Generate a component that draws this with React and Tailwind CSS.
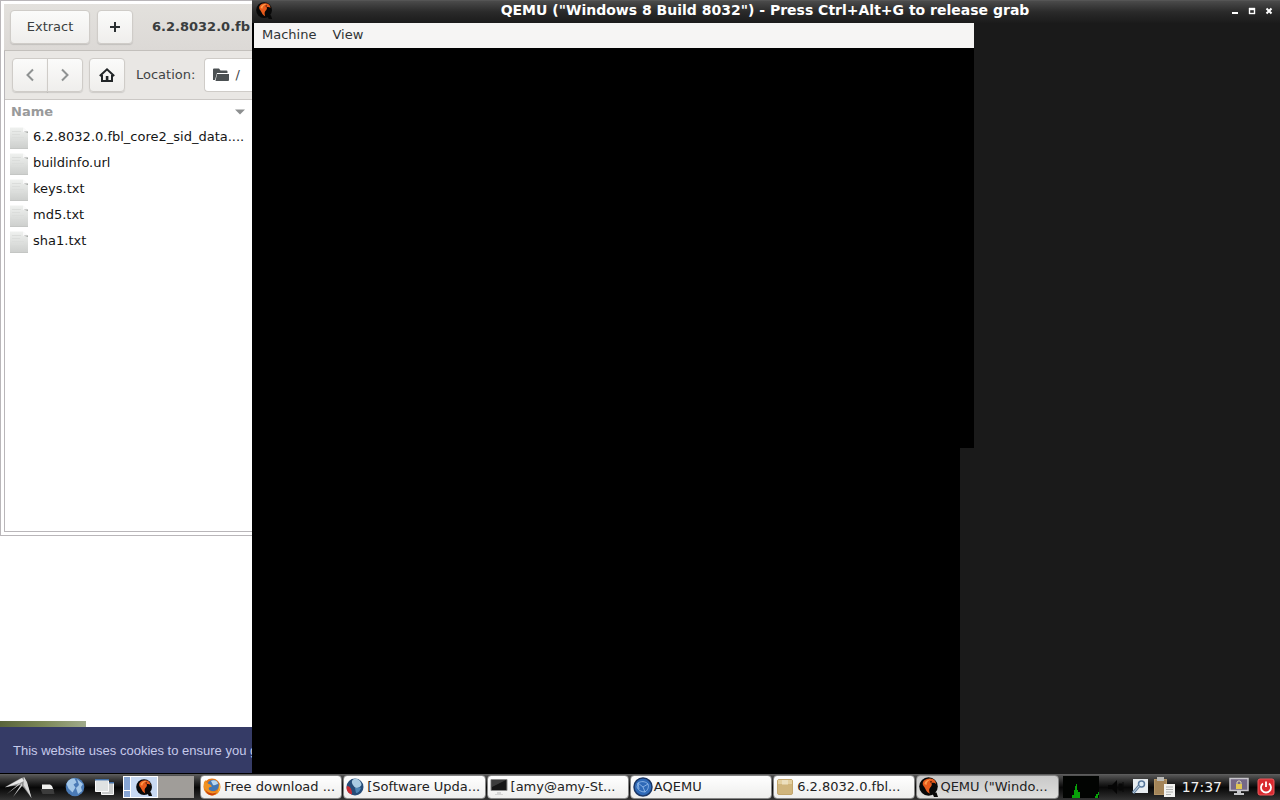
import React from "react";

function QemuIcon({ className }) {
  return (
    <svg viewBox="0 0 20 20" className={className} aria-hidden="true">
      <path d="M13 15.500h4.500l1.500 4.500h-4z" fill="#080808" />
      <circle cx="9.500" cy="9.500" r="9.300" fill="#080808" />
      <path d="M4.500 9C2 5 6 1 11.500 1.500c3.500.4 5.600 2.600 5.500 5.500-1-1-3-1.500-4.500-.8 1 1.800-.2 3-1.500 4.500-1.200 1.600-1 3.800-.2 6C6.500 14.500 7 11.500 4.500 9z" fill="#e85b1c" />
      <path d="M5.500 7c0-2.500 3-4.800 6.500-4.500-2.500.8-4.500 2.500-4.500 5.500z" fill="#ff9a4a" />
      <circle cx="12" cy="4.800" r=".9" fill="#40150a" />
    </svg>
  );
}

function FileIcon() {
  return (
    <svg viewBox="0 0 20 22" className="h-[22px] w-5 shrink-0" aria-hidden="true">
      <defs>
        <linearGradient id="page" x1="0" y1="0" x2="0" y2="1">
          <stop offset="0" stopColor="#eff1ef" />
          <stop offset="1" stopColor="#cccecc" />
        </linearGradient>
      </defs>
      <path d="M1 .5h13L19 5v17H1z" fill="url(#page)" />
      <path d="M14 .5V5h5z" fill="#fafafa" />
      <path d="M14.500 4.500H19V6z" fill="#9c9e9c" />
      <path d="M3 4.500h9M3 7.500h8M3 10.500h12M3 13.500h12" stroke="#dbdddb" strokeWidth="1" />
      <path d="M1 21.500h18" stroke="#c4c6c4" />
    </svg>
  );
}

const toolButton =
  "flex items-center justify-center border border-[#cfccc8] bg-linear-to-b from-[#fbfbfa] to-[#efeeec] text-[#3a3f40] shadow-[0_1px_1px_rgba(0,0,0,0.12)]";

const files = ["6.2.8032.0.fbl_core2_sid_data....", "buildinfo.url", "keys.txt", "md5.txt", "sha1.txt"];

function ArchiveWindow() {
  return (
    <section className="flex h-[536px] flex-col overflow-hidden border border-r-0 border-[#b9b6b9] bg-white pt-[3px] pb-[3px] pl-[3px]">
      <header className="flex h-[47px] shrink-0 items-center gap-[7px] border-b border-[#c3c0bc] bg-linear-to-b from-[#e3e1dd] to-[#dcd9d6] pb-px pl-[6px]">
        <button className={`h-[34px] w-20 shrink-0 rounded ${toolButton}`}>Extract</button>
        <button className={`h-[34px] w-9 shrink-0 rounded ${toolButton}`} aria-label="Add files">
          <svg viewBox="0 0 12 12" className="size-3" aria-hidden="true">
            <path d="M6 1v10M1 6h10" stroke="#2b3032" strokeWidth="2" />
          </svg>
        </button>
        <h1 className="ml-3 whitespace-nowrap font-bold text-[#3a3d3e]">6.2.8032.0.fb</h1>
      </header>
      <div className="flex min-h-0 flex-1 flex-col border-b border-l border-[#b9b6b9]">
        <div className="flex h-[49px] shrink-0 items-center border-b border-[#cbc8c5] bg-[#e9e7e4] pl-[7px]">
          <div className="flex">
            <button className={`h-[34px] w-9 rounded-l ${toolButton}`} aria-label="Back">
              <svg viewBox="0 0 16 16" className="size-4" aria-hidden="true">
                <path d="M11 2.500 5.500 8l5.500 5.500" fill="none" stroke="#8f9292" strokeWidth="2" />
              </svg>
            </button>
            <button className={`-ml-px h-[34px] w-9 rounded-r ${toolButton}`} aria-label="Forward">
              <svg viewBox="0 0 16 16" className="size-4" aria-hidden="true">
                <path d="m5 2.500 5.500 5.500L5 13.500" fill="none" stroke="#8f9292" strokeWidth="2" />
              </svg>
            </button>
          </div>
          <button className={`ml-[6px] h-[34px] w-9 shrink-0 rounded ${toolButton}`} aria-label="Home">
            <svg viewBox="0 0 16 16" className="size-4" aria-hidden="true">
              <path d="M.8 9 8 2.300 15.200 9M3 8v6h10V8" fill="none" stroke="#222628" strokeWidth="2" />
              <path d="M6.800 9h2.600v5H6.800z" fill="#222628" />
            </svg>
          </button>
          <label htmlFor="location" className="ml-[11px] shrink-0">Location:</label>
          <div className="ml-[9px] flex h-[34px] min-w-0 flex-1 items-center rounded-l border border-r-0 border-[#cfccc8] bg-white pl-2">
            <svg viewBox="0 0 16 16" className="size-4 shrink-0" aria-hidden="true">
              <path d="M0 13V2.500Q0 1.500 1 1.500h5l1.500 2h6q1 0 1 1V6H4L2 13z" fill="#4b5052" />
              <path d="M4 7h12v6q0 1-1 1H2.500z" fill="#4b5052" />
            </svg>
            <input id="location" defaultValue="/" className="ml-[6px] w-full min-w-0 bg-transparent outline-none" />
          </div>
        </div>
        <table className="w-full table-fixed border-collapse text-left">
          <thead>
            <tr className="h-[25px]">
              <th className="p-0 pb-[2px] font-bold text-[#999a9b]">
                <span className="flex items-center justify-between pr-[7px] pl-[6px]">
                  Name
                  <svg viewBox="0 0 10 6" className="h-[6px] w-[10px]" aria-hidden="true">
                    <path d="M0 .5h10L5 5.500z" fill="#8d8f90" />
                  </svg>
                </span>
              </th>
            </tr>
          </thead>
          <tbody className="text-[#151515]">
            {files.map((name) => (
              <tr key={name} className="h-[26px]">
                <td className="p-0">
                  <span className="flex items-center gap-1 whitespace-nowrap pl-1">
                    <FileIcon />
                    <span className="pb-[2px]">{name}</span>
                  </span>
                </td>
              </tr>
            ))}
          </tbody>
        </table>
      </div>
    </section>
  );
}

function QemuWindow() {
  return (
    <section className="flex min-w-0 flex-1 flex-col bg-[#1a1a1a]">
      <header className="flex h-[23px] shrink-0 items-center border-t border-[#555] bg-linear-to-b from-[#4b4b4b] via-[#2a2a2a] to-[#1b1b1b] pr-[6px] pb-1 pl-1">
        <div className="w-11">
          <QemuIcon className="mt-px size-[17px]" />
        </div>
        <h2 className="flex-1 text-center text-[14px] font-bold whitespace-nowrap text-white">
          QEMU ("Windows 8 Build 8032") - Press Ctrl+Alt+G to release grab
        </h2>
        <div className="flex w-11 gap-[7px]">
          <button aria-label="Minimize">
            <svg viewBox="0 0 10 10" className="size-[10px]" aria-hidden="true"><path d="M2 7h6v2H2z" fill="#fff" /></svg>
          </button>
          <button aria-label="Maximize">
            <svg viewBox="0 0 10 10" className="size-[10px]" aria-hidden="true"><path d="M2 3h6v6H2zM3 5v3h4V5z" fill="#fff" stroke="#fff" strokeWidth=".4" fillRule="evenodd" /></svg>
          </button>
          <button aria-label="Close">
            <svg viewBox="0 0 10 10" className="size-[10px]" aria-hidden="true"><path d="m2.500 3.500 5 5m0-5-5 5" stroke="#fff" strokeWidth="2" /></svg>
          </button>
        </div>
      </header>
      <div className="flex min-h-0 flex-1 border-l-2 border-black">
        <div className="flex w-[720px] flex-col">
          <nav className="flex h-[25px] shrink-0 items-center gap-4 bg-[#f6f5f4] pb-px pl-2 text-[#303435]">
            <button>Machine</button>
            <button>View</button>
          </nav>
          <div className="h-[400px] shrink-0 bg-black" />
          <div className="mr-[14px] flex-1 bg-black" />
        </div>
      </div>
    </section>
  );
}

function FirefoxIcon() {
  return (
    <svg viewBox="0 0 18 18" className="size-[18px] shrink-0" aria-hidden="true">
      <circle cx="9" cy="9" r="8.500" fill="#e87817" />
      <circle cx="10" cy="7.500" r="5.800" fill="#4277b5" />
      <path d="M8 3c3-2 7 0 7 3-2 0-3 2-5 1z" fill="#b9d7ef" />
      <path d="M1 4C0 10 2 16 9 17.500c5 0 8-4 8-9-1 4-4 6-7 5-3 0-5-2-4-4l3-1C8 6 5 6 4 5 3 4 3 2 3 2z" fill="#f19322" />
      <path d="M2 11c2 4 8 6 12 3-2 3-4 3.500-6 3.300C5 17 3 14 2 11z" fill="#c9410e" />
      <path d="M16 5c1.500 3 1 7-1 9 1-3 1-6 1-9z" fill="#ffd455" />
    </svg>
  );
}

function SeaIcon() {
  return (
    <svg viewBox="0 0 18 18" className="size-[18px] shrink-0" aria-hidden="true">
      <circle cx="9" cy="9" r="8.500" fill="#254c78" />
      <path d="M7 1.500c4-2 8 1 8.500 5.500-2 3-5 4-7 2S4.500 4 7 1.500z" fill="#a9cbe2" />
      <path d="M9 10c2 0 5-1 6 0-1 3-3 5-5 5z" fill="#4d84b4" />
      <path d="M1 8c3 0 5 3 5 8.500-4-1-6.500-4.500-5-8.500z" fill="#c92b33" />
    </svg>
  );
}

function TerminalIcon() {
  return (
    <svg viewBox="0 0 18 18" className="size-[18px] shrink-0" aria-hidden="true">
      <path d="M1 1.500h16v11H1z" fill="#161616" stroke="#8a8a8a" />
      <path d="M2 2h14L2 9z" fill="#3d3d3d" />
      <path d="M7 14h4v2h2v1H5v-1h2z" fill="#d4d4d4" />
    </svg>
  );
}

function AqemuIcon() {
  return (
    <svg viewBox="0 0 20 20" className="size-5 shrink-0" aria-hidden="true">
      <circle cx="10" cy="10" r="9" fill="#2e69b7" stroke="#1b3767" strokeWidth="1.500" />
      <path d="M5 6c3-2 7-2 10 1 1 3 0 6-3 8-4 0-7-2-8-5zM5 6l5 4 5-3M10 10l2 5M5 6l1 6" fill="none" stroke="#8fb8ea" strokeWidth=".9" />
    </svg>
  );
}

function PackageIcon() {
  return (
    <svg viewBox="0 0 16 16" className="mx-px size-4 shrink-0" aria-hidden="true">
      <rect x=".5" y=".5" width="15" height="15" rx="1.500" fill="#d0b57c" stroke="#c3a66c" />
      <path d="M1 1h14v4H1z" fill="#e3cf9f" />
      <path d="M5 1h6v4.500H5z" fill="#ecdfbd" />
    </svg>
  );
}

const tasks = [
  { label: "Free download ...", icon: <FirefoxIcon />, gap: "gap-[3px]" },
  { label: "[Software Upda...", icon: <SeaIcon />, gap: "gap-[3px]" },
  { label: "[amy@amy-St...", icon: <TerminalIcon />, gap: "gap-[3px]" },
  { label: "AQEMU", icon: <AqemuIcon />, gap: "gap-px" },
  { label: "6.2.8032.0.fbl...", icon: <PackageIcon />, gap: "gap-[3px]" },
  { label: 'QEMU ("Windo...', icon: <QemuIcon className="size-5 shrink-0" />, gap: "gap-px", active: true },
];

function Launchers() {
  return (
    <div className="flex w-[200px] shrink-0 items-center">
      <button className="ml-1" aria-label="Menu">
        <svg viewBox="0 0 28 24" className="h-6 w-7" aria-hidden="true">
          <path d="M1 12 16 3.500 20 2l3 6 4.500 15L20 13l-3-3z" fill="#8d8d8d" />
          <path d="M1 12.500 18 3l2 3-4 2z" fill="#e8e8e8" />
          <path d="M17 7 3 19l12-9zM18 8l-9 14 9-11z" fill="#d0d0d0" />
          <path d="m20 2 3 5 4.500 16-8-13z" fill="#d8d8d8" />
        </svg>
      </button>
      <button className="ml-[7px]" aria-label="File manager">
        <svg viewBox="0 0 18 18" className="size-[18px]" aria-hidden="true">
          <path d="M3 12V6.500h8l2 1.500 1.500 4z" fill="#f0f0ee" />
          <path d="M1.500 11h13l1 5h-12z" fill="#3c3c3c" />
        </svg>
      </button>
      <button className="ml-2" aria-label="Web browser">
        <svg viewBox="0 0 20 20" className="size-5" aria-hidden="true">
          <circle cx="10" cy="10" r="9.300" fill="#4a7ab5" />
          <path d="M1.500 7c1-4 5-6 8-5.500l2 4-3 2 2 3-3 5-4-4zM12 2l6 5-2 3 1 4-4 3-2-6 3-3z" fill="#a4c7e7" />
        </svg>
      </button>
      <button className="ml-[9px]" aria-label="Show windows">
        <svg viewBox="0 0 22 20" className="h-5 w-[22px]" aria-hidden="true">
          <path d="M7.500 5.500h12v12h-12z" fill="#c9cbcb" stroke="#f6f6f6" />
          <path d="M8 5h12v1.500H8z" fill="#416ea5" />
          <path d="M1.500 3.500h13v11h-13z" fill="#dfe2e2" stroke="#fafafa" />
          <path d="M1 2h14v1.500H1z" fill="#416ea5" />
        </svg>
      </button>
      <div className="ml-[7px] flex h-[22px] w-[71px]">
        <button className="flex w-[35px]" aria-label="Desktop 1">
          <span className="flex h-full w-[7px] flex-col border border-r-0 border-white bg-[#86a5d4]">
            <span className="h-[14px] border-b border-white" />
          </span>
          <span className="flex h-full flex-1 items-center justify-center border border-white bg-[#c8d9f2]">
            <QemuIcon className="size-[17px]" />
          </span>
        </button>
        <button className="flex-1 bg-[#a09d99]" aria-label="Desktop 2" />
      </div>
    </div>
  );
}

function Tray() {
  return (
    <div className="flex shrink-0 items-center pr-[5px] pl-1">
      <svg viewBox="0 0 36 22" className="h-[22px] w-9" aria-hidden="true">
        <path d="M0 0h36v22H0z" fill="#020402" />
        <path d="M9 22v-3h2v-5h1v-4h1v-2h1v6h1v2h2v6zM32 22v-2h1v-2h2v-2h1v3h-1v3z" fill="#08a009" />
      </svg>
      <svg viewBox="0 0 18 18" className="ml-2 size-[18px]" aria-hidden="true">
        <path d="M1 7h4l5-5v14l-5-5H1z" fill="#050505" />
        <path d="M12 6h3v6h-3zM16 4v10" fill="#080808" stroke="#090909" />
      </svg>
      <svg viewBox="0 0 18 18" className="ml-[6px] size-[18px]" aria-hidden="true">
        <path d="M2 1h15v14H2z" fill="#e8edf1" />
        <circle cx="10.500" cy="6" r="3" fill="#dceaf5" stroke="#58779b" strokeWidth="1.500" />
        <path d="m8 8-6 7" stroke="#6784a3" strokeWidth="3" />
        <path d="m8 8-6 7" stroke="#c7d6e3" />
      </svg>
      <svg viewBox="0 0 23 22" className="ml-1 h-[22px] w-[23px]" aria-hidden="true">
        <path d="M1 3h13v16H1z" fill="#b39567" />
        <path d="M2 4h11v14H2z" fill="#a38458" />
        <path d="M4 1h7v4H4z" fill="#babab7" />
        <path d="M11 8h11v13H11z" fill="#f2f2f0" />
        <path d="M13 11h7M13 13.500h7M13 16h7M13 18.500h5" stroke="#aeb0ae" />
      </svg>
      <time className="ml-[6px] text-[14px] text-[#f0f0f0]">17:37</time>
      <svg viewBox="0 0 20 20" className="ml-[7px] size-5" aria-hidden="true">
        <path d="M1 1.500h18v12H1z" fill="#756886" stroke="#c8c6cc" strokeWidth="1.500" />
        <path d="M8 14h4v2h3v2H5v-2h3z" fill="#c5c5c8" />
        <path d="M7 7h6v5H7z" fill="#e1c653" />
        <path d="M8 7V5q2-2.500 4 0v2" fill="none" stroke="#ddd6b0" />
      </svg>
      <button className="ml-2" aria-label="Shut down">
        <svg viewBox="0 0 18 18" className="size-[18px]" aria-hidden="true">
          <rect x="1" y="1" width="16" height="16" rx="2" fill="#d92a30" stroke="#ed595c" />
          <path d="M6 5.500a5 5 0 1 0 6 0M9 3.500V9" fill="none" stroke="#fff" strokeWidth="1.800" />
        </svg>
      </button>
    </div>
  );
}

function Taskbar() {
  return (
    <footer className="flex h-[26px] shrink-0 items-center border-t border-[#5c5c5c] bg-linear-to-b from-[#565656] via-[#080808] to-[#343434] pb-px">
      <Launchers />
      <div className="flex min-w-0 flex-1 gap-px">
        {tasks.map((task) => (
          <button
            key={task.label}
            className={`flex h-6 min-w-0 flex-1 items-center overflow-hidden rounded border border-[#858585] pb-px pl-[2px] whitespace-nowrap text-[#222] ${task.gap} ${
              task.active ? "bg-linear-to-b from-[#c9c9c9] to-[#dededc]" : "bg-linear-to-b from-white to-[#eeeeed]"
            }`}
          >
            {task.icon}
            {task.label}
          </button>
        ))}
      </div>
      <Tray />
    </footer>
  );
}

export default function App() {
  return (
    <div className="flex h-screen flex-col overflow-hidden bg-black font-['DejaVu_Sans',sans-serif] text-[13px] leading-5 text-[#3f4445]">
      <main className="flex min-h-0 flex-1">
        <div className="flex w-[252px] shrink-0 flex-col overflow-hidden bg-white">
          <ArchiveWindow />
          <div className="mt-auto h-[6px] w-[86px] shrink-0 bg-linear-to-r from-[#59643b] via-[#7b8757] to-[#a0aa8b]" />
          <p className="flex h-[47px] shrink-0 items-center border-b border-black bg-[#353b66] pt-px pl-[13px] font-['Liberation_Sans',sans-serif] text-[13px] whitespace-nowrap text-[#c5c9ea]">
            This website uses cookies to ensure you g
          </p>
        </div>
        <QemuWindow />
      </main>
      <Taskbar />
    </div>
  );
}
